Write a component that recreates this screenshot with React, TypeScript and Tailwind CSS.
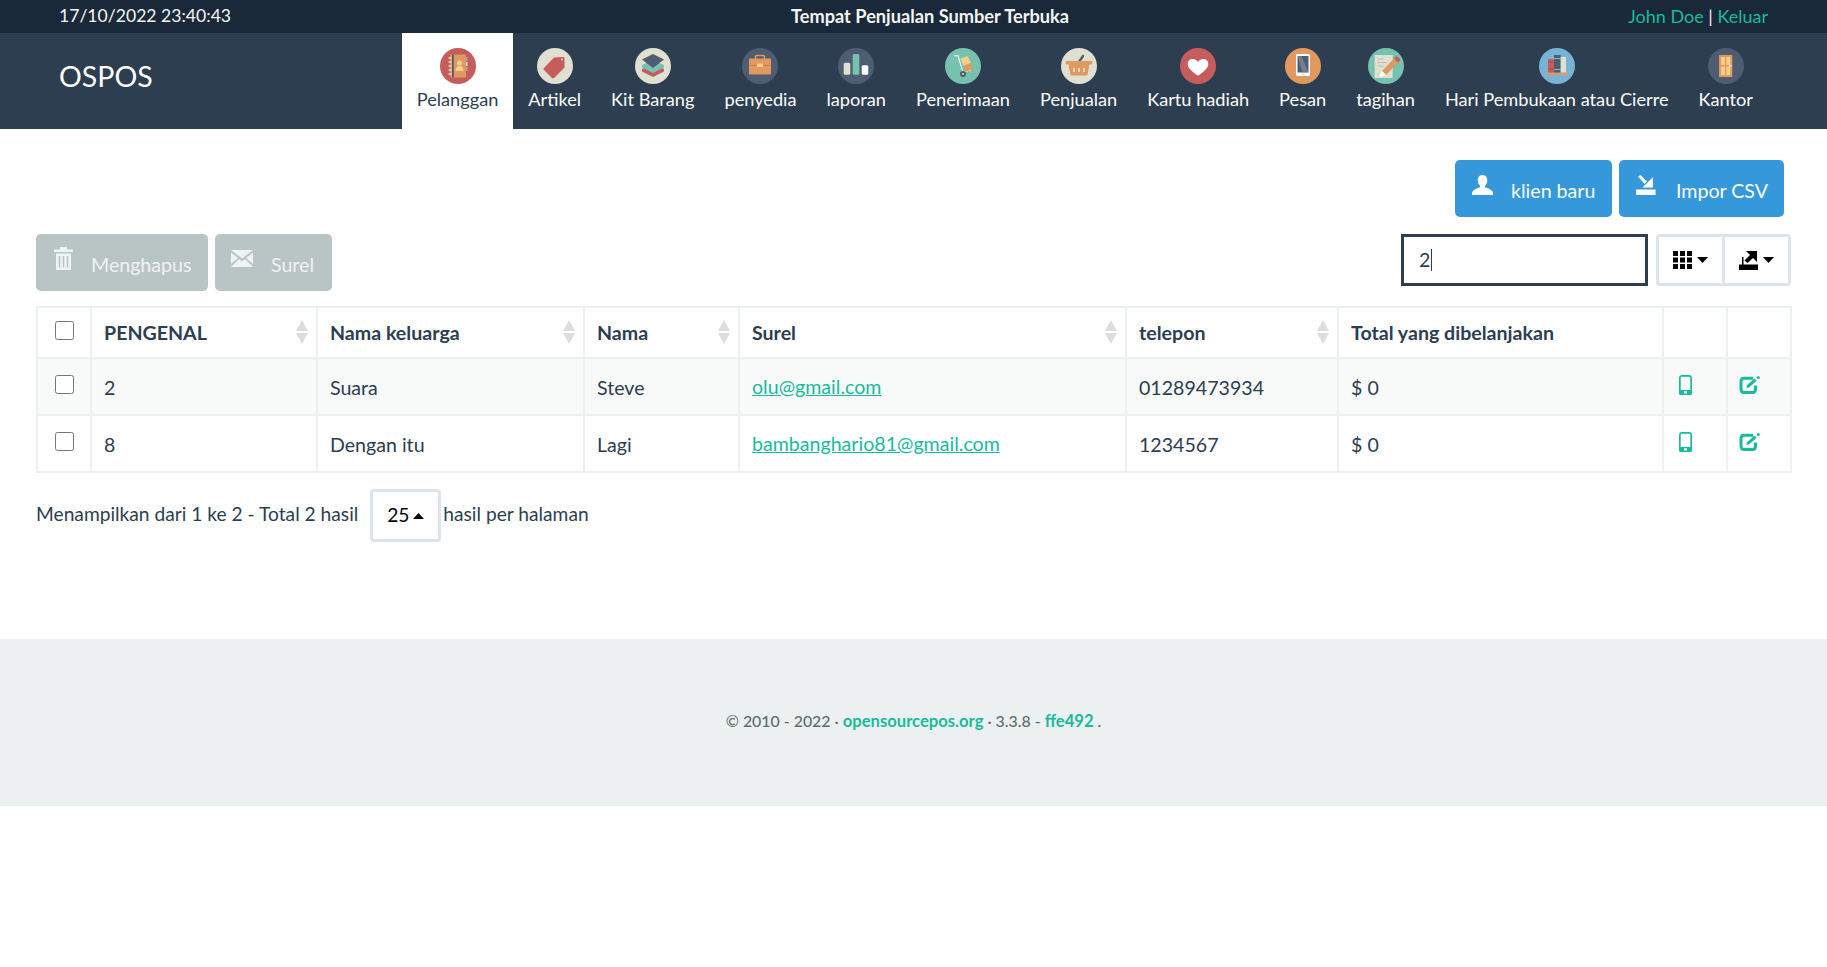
import React from "react";

const menu = [
  { label: "Pelanggan", icon: "contacts", active: true },
  { label: "Artikel", icon: "tag" },
  { label: "Kit Barang", icon: "layers" },
  { label: "penyedia", icon: "case" },
  { label: "laporan", icon: "bars" },
  { label: "Penerimaan", icon: "trolley" },
  { label: "Penjualan", icon: "basket" },
  { label: "Kartu hadiah", icon: "heart" },
  { label: "Pesan", icon: "phone" },
  { label: "tagihan", icon: "note" },
  { label: "Hari Pembukaan atau Cierre", icon: "books" },
  { label: "Kantor", icon: "door" },
];

const rows = [
  { id: "2", last: "Suara", first: "Steve", email: "olu@gmail.com", phone: "01289473934", total: "$ 0" },
  { id: "8", last: "Dengan itu", first: "Lagi", email: "bambanghario81@gmail.com", phone: "1234567", total: "$ 0" },
];

const RED = "#c75c5c";
const CREAM = "#e0e0d1";
const SLATE = "#4f5d73";
const GREEN = "#76c2af";
const ORANGE = "#e0995e";
const YELLOW = "#f5cf87";

function MenuIcon({ name }: { name: string }) {
  const bg: Record<string, string> = {
    contacts: RED, tag: CREAM, layers: CREAM, case: SLATE, bars: SLATE, trolley: GREEN,
    basket: CREAM, heart: RED, phone: ORANGE, note: GREEN, books: "#77b3d4", door: SLATE,
  };
  return (
    <svg width="36" height="36" viewBox="0 0 36 36">
      <circle cx="18" cy="18" r="18" fill={bg[name]} />
      {name === "contacts" && (
        <>
          <rect x="25.5" y="9" width="2" height="4" fill="#77b3d4" />
          <rect x="25.5" y="14" width="2" height="4" fill={CREAM} />
          <rect x="25.5" y="19" width="2" height="4" fill={GREEN} />
          <rect x="10" y="6.5" width="16" height="23" rx="1" fill={ORANGE} />
          <rect x="12" y="6.5" width="1.8" height="23" fill={SLATE} />
          <path d="M8.5 10h3M8.5 14h3M8.5 18h3M8.5 22h3M8.5 26h3" stroke={CREAM} strokeWidth="1.4" />
          <circle cx="19.5" cy="15" r="2.6" fill={YELLOW} />
          <path d="M15.5 23c0-3.500 1.500-5 4-5s4 1.500 4 5z" fill={YELLOW} />
        </>
      )}
      {name === "tag" && (
        <>
          <path d="M17 9.500 26 9c1 0 1.500.5 1.500 1.500V19.500L17 30c-.6.600-1.400.600-2 0L7 22c-.6-.6-.6-1.400 0-2z" fill={RED} />
          <circle cx="25" cy="11.500" r="1" fill={CREAM} />
        </>
      )}
      {name === "layers" && (
        <>
          <path d="M18 16 29 21v2.500L18 29 7 23.500V21z" fill={RED} />
          <path d="M18 12 29 17v2.500L18 25 7 19.500V17z" fill={GREEN} />
          <path d="M18 6 29 11.500 18 20 7 11.500z" fill={SLATE} />
        </>
      )}
      {name === "case" && (
        <>
          <rect x="13.500" y="7.500" width="9" height="5" rx="1.500" fill="none" stroke={ORANGE} strokeWidth="1.600" />
          <rect x="7" y="10.500" width="22" height="16" rx="1" fill={ORANGE} />
          <rect x="7" y="17" width="22" height="1" fill="#c9854f" />
          <rect x="15" y="15.500" width="6" height="3.500" rx=".5" fill={YELLOW} />
        </>
      )}
      {name === "bars" && (
        <>
          <rect x="5.700" y="14.700" width="6.600" height="12" rx="1.500" fill={CREAM} />
          <rect x="14.700" y="6" width="6.600" height="20.700" rx="1.500" fill={GREEN} />
          <rect x="23.700" y="17.300" width="6.600" height="9.400" rx="1.500" fill="#fff" />
        </>
      )}
      {name === "trolley" && (
        <>
          <path d="M9.300 7.700H13L18 24.300 26 22" fill="none" stroke="#fff" strokeWidth="1.100" />
          <path d="M15.500 10.500 22.500 8 26 15 18.500 18z" fill={YELLOW} />
          <path d="M18.500 18 26 15 28 21.500 20.500 24z" fill={ORANGE} />
          <circle cx="18" cy="26" r="3" fill={SLATE} />
          <circle cx="18" cy="26" r="1.100" fill={YELLOW} />
        </>
      )}
      {name === "basket" && (
        <>
          <path d="M15.500 17.500 22 8" stroke={SLATE} strokeWidth="2.400" strokeLinecap="round" />
          <path d="M7.500 16h21L26.500 27.500h-17z" fill={ORANGE} />
          <rect x="4.700" y="13" width="26.600" height="3.400" rx="1" fill={ORANGE} />
          <path d="M13 20v4M18 20v4M23 20v4" stroke={CREAM} strokeWidth="1.700" />
        </>
      )}
      {name === "heart" && (
        <path d="M18 27.700C12 23.500 7.700 20.200 7.700 16c0-3 2.300-5 5-5 2.300 0 4.200 1.200 5.300 3 1.100-1.800 3-3 5.300-3 2.700 0 5 2 5 5 0 4.200-4.300 7.500-10.300 11.700z" fill="#fff" />
      )}
      {name === "phone" && (
        <>
          <rect x="11" y="6" width="14" height="22" rx="1.500" fill="#fff" />
          <rect x="12.500" y="8" width="11" height="16.500" fill={SLATE} />
          <path d="M12.500 8h4l7 16.500h-6z" fill="#8a93a6" opacity=".6" />
          <circle cx="18" cy="26.200" r="1" fill={CREAM} />
        </>
      )}
      {name === "note" && (
        <>
          <rect x="6.700" y="7" width="18" height="23" fill={CREAM} />
          <path d="M9.500 11h6M9.500 14.500h9M9.500 18h6M9.500 26h6" stroke="#b9b9a8" strokeWidth=".9" />
          <path d="M14 23 26 10.500l4 4L18 27z" fill={ORANGE} />
          <path d="M26 10.500l1.800-1.800c.6-.6 1.400-.6 2 0l2 2c.6.6.6 1.400 0 2L30 14.500z" fill={RED} />
          <path d="M14 23l4 4-5.500 2z" fill="#fff" />
          <circle cx="13" cy="27" r="1.800" fill="#fff" />
        </>
      )}
      {name === "books" && (
        <>
          <rect x="9" y="11" width="6" height="13.700" rx="1" fill={RED} />
          <path d="M9 14h6M9 21h6" stroke="#a84a4a" strokeWidth="1" />
          <rect x="15" y="7" width="6.700" height="17.700" fill={SLATE} />
          <path d="M15 10.500h6.700M15 21.500h6.700" stroke={GREEN} strokeWidth="1" />
          <rect x="21.700" y="9" width="5.300" height="15.700" fill={CREAM} />
          <rect x="7" y="24.700" width="22" height="2.300" fill={ORANGE} />
        </>
      )}
      {name === "door" && (
        <>
          <rect x="11" y="7" width="13.300" height="22" rx=".5" fill={ORANGE} />
          <rect x="13" y="9" width="4" height="8" fill={YELLOW} />
          <rect x="18.300" y="9" width="4" height="8" fill={YELLOW} />
          <rect x="13" y="18.500" width="4" height="8.500" fill={YELLOW} />
          <rect x="18.300" y="18.500" width="4" height="8.500" fill={YELLOW} />
          <circle cx="22.500" cy="18" r="1.300" fill={CREAM} />
        </>
      )}
    </svg>
  );
}

function SortArrows() {
  return (
    <svg width="12" height="24" viewBox="0 0 12 24" className="shrink-0">
      <path d="M6 0 12 11H0z" fill="#dddddd" />
      <path d="M0 13h12L6 24z" fill="#dddddd" />
    </svg>
  );
}

function PhoneGlyph() {
  return (
    <svg width="13" height="20" viewBox="0 0 13 20">
      <path fillRule="evenodd" d="M3 0h7c1.700 0 3 1.300 3 3v15.500c0 .8-.7 1.500-1.500 1.500h-10C.7 20 0 19.300 0 18.500V3C0 1.300 1.300 0 3 0zM1.700 3v12h9.600V3c0-.8-.6-1.300-1.300-1.300H3C2.300 1.700 1.700 2.200 1.700 3zM5 16.300V18.500h3v-2.200z" fill="#18bc9c" />
    </svg>
  );
}

function EditGlyph() {
  return (
    <svg width="21" height="19" viewBox="0 0 21 19">
      <path d="M14 2.200H5C3 2.200 2 3.500 2 5.500v7.500c0 2.200 1 3.500 3 3.500h8.500c2 0 3-1.300 3-3.500V9.500" fill="none" stroke="#18bc9c" strokeWidth="3" />
      <path d="M7.500 12 8 9.300 15.500 2.500 17.700 4.700 10 11.500z" fill="#18bc9c" />
      <circle cx="19.300" cy="1.600" r="1.500" fill="#18bc9c" />
    </svg>
  );
}

function Caret() {
  return (
    <svg width="11" height="6" viewBox="0 0 11 6">
      <path d="M0 0h11L5.500 6z" fill="#000" />
    </svg>
  );
}

export default function App() {
  return (
    <div className="min-h-[967px] bg-white font-['Lato','Noto_Sans',sans-serif] text-[19.6px] text-[#2c3e50]">
      <div className="flex h-[33px] items-center justify-between bg-[#1a2939] px-[59px] text-[#f4f6f6]">
        <div className="w-[333px] text-[17.6px]">17/10/2022 23:40:43</div>
        <div className="text-[18.2px] font-bold">Tempat Penjualan Sumber Terbuka</div>
        <div className="w-[300px] text-right text-[18px] text-[#ecf0f1]">
          <a className="text-[#18bc9c]">John Doe</a> | <a className="text-[#18bc9c]">Keluar</a>
        </div>
      </div>

      <nav className="flex h-[96px] items-stretch justify-between bg-[#2c3e50] pl-[59px] pr-[59px]">
        <div className="pt-[23px] text-[28.5px] leading-[40px] text-white">OSPOS</div>
        <ul className="flex">
          {menu.map((item) => (
            <li
              key={item.label}
              className={
                item.active
                  ? "flex flex-col items-center bg-white px-[15px] pt-[15px] text-[#2c3e50]"
                  : "flex flex-col items-center px-[15px] pt-[15px] text-white"
              }
            >
              <MenuIcon name={item.icon} />
              <span className="mt-[3px] whitespace-nowrap text-[18.2px] leading-[24px]">{item.label}</span>
            </li>
          ))}
        </ul>
      </nav>

      <main className="px-[36px]">
        <div className="flex justify-end gap-[7px] pr-[7px] pt-[31px]">
          <button className="flex h-[57px] w-[157px] items-center rounded-[5px] bg-[#3498db] pl-[17px] text-white">
            <svg width="21" height="20" viewBox="0 0 21 20" className="mb-[7px]">
              <path d="M10.500 0c3 0 4.800 2.200 4.800 5.300 0 2.300-1 4.300-2.300 5.500v1.400c3 1 6.500 2.500 7.500 4.300.4.800.5 2.100.5 3.500H0c0-1.400.1-2.700.5-3.500 1-1.800 4.500-3.300 7.500-4.300v-1.400C6.700 9.600 5.700 7.600 5.700 5.300 5.700 2.200 7.500 0 10.500 0z" fill="#fff" />
            </svg>
            <span className="ml-[18px] whitespace-nowrap pt-[5px]">klien baru</span>
          </button>
          <button className="flex h-[57px] w-[165px] items-center rounded-[5px] bg-[#3498db] pl-[17px] text-white">
            <svg width="20" height="20" viewBox="0 0 20 20" className="mb-[7px]">
              <path d="M2 1.500 4.500 0 11 6.500 8.500 9zM17 2v10.500H6.500zM0 14.500h19.500V20H0z" fill="#fff" />
            </svg>
            <span className="ml-[20px] whitespace-nowrap pt-[5px]">Impor CSV</span>
          </button>
        </div>

        <div className="mt-[17px] flex items-start justify-between">
          <div className="flex gap-[7px]">
            <button className="flex h-[57px] w-[172px] items-center rounded-[5px] bg-[#b9c5c4] pl-[18px] text-[#f0f3f3]">
              <svg width="19" height="23" viewBox="0 0 19 23" className="mb-[9px]">
                <path fillRule="evenodd" d="M6 0h7v2.500h6V5H0V2.500h6zM2 6.500h15V23H2zM4.800 9v11.500H6.300V9zM8.800 9v11.500h1.500V9zM12.800 9v11.500h1.500V9z" fill="#f0f3f3" />
              </svg>
              <span className="ml-[18px] whitespace-nowrap pt-[4px]">Menghapus</span>
            </button>
            <button className="flex h-[57px] w-[117px] items-center rounded-[5px] bg-[#b9c5c4] pl-[16px] text-[#f0f3f3]">
              <svg width="22" height="17" viewBox="0 0 22 17" className="mb-[9px]">
                <path d="M0 0h22L11 8.500zM0 2.500 7 8 0 14zM22 2.500V14L15 8zM8 9l3 2.300L14 9l8 8H0z" fill="#f0f3f3" />
              </svg>
              <span className="ml-[18px] whitespace-nowrap pt-[4px]">Surel</span>
            </button>
          </div>
          <div className="flex gap-[8px]">
            <div className="flex h-[52px] w-[247px] items-center border-[3px] border-[#2c3e50] pl-[15px] text-[#2c3e50]">
              2<span className="ml-[1px] inline-block h-[22px] w-px bg-[#2c3e50]" />
            </div>
            <div className="flex h-[52px] rounded-[4px] border-[3px] border-[#dce4ec]">
              <div className="flex w-[66px] items-center justify-center gap-[5px] border-r-[3px] border-[#dce4ec]">
                <svg width="19" height="18" viewBox="0 0 19 18">
                  <path d="M0 0h5v5H0zM7 0h5v5H7zM14 0h5v5h-5zM0 6.500h5v5H0zM7 6.500h5v5H7zM14 6.500h5v5h-5zM0 13h5v5H0zM7 13h5v5H7zM14 13h5v5h-5z" fill="#000" />
                </svg>
                <Caret />
              </div>
              <div className="flex w-[63px] items-center justify-center gap-[5px]">
                <svg width="19" height="20" viewBox="0 0 19 20">
                  <path d="M5.500 10.500 11 5 7 1h11v11l-4-4-5.500 5zM3 7h1.500v7.500H3zM0 14.500h19V20H0z" fill="#000" />
                </svg>
                <Caret />
              </div>
            </div>
          </div>
        </div>

        <table className="mt-[15px] w-[1754px] table-fixed border-collapse">
          <colgroup>
            <col className="w-[54px]" />
            <col className="w-[226px]" />
            <col className="w-[267px]" />
            <col className="w-[155px]" />
            <col className="w-[387px]" />
            <col className="w-[212px]" />
            <col className="w-[325px]" />
            <col className="w-[64px]" />
            <col className="w-[64px]" />
          </colgroup>
          <thead>
            <tr className="h-[51px]">
              <th className="border-2 border-[#ecf0f1] text-center">
                <input type="checkbox" className="mb-[8px] h-[19px] w-[19px] align-middle" />
              </th>
              {["PENGENAL", "Nama keluarga", "Nama", "Surel", "telepon"].map((label) => (
                <th key={label} className="border-2 border-[#ecf0f1] pl-[12px] pr-[8px] text-left font-bold">
                  <div className="flex items-center justify-between">
                    <span>{label}</span>
                    <SortArrows />
                  </div>
                </th>
              ))}
              <th className="border-2 border-[#ecf0f1] pl-[12px] text-left font-bold">Total yang dibelanjakan</th>
              <th className="border-2 border-[#ecf0f1]" />
              <th className="border-2 border-[#ecf0f1]" />
            </tr>
          </thead>
          <tbody>
            {rows.map((row, i) => (
              <tr key={row.id} className={i === 0 ? "h-[57px] bg-[#f8f9f9]" : "h-[57px]"}>
                <td className="border-2 border-[#ecf0f1] text-center">
                  <input type="checkbox" className="mb-[8px] h-[19px] w-[19px] align-middle" />
                </td>
                <td className="border-2 border-[#ecf0f1] pl-[12px] pt-[2px]">{row.id}</td>
                <td className="border-2 border-[#ecf0f1] pl-[12px] pt-[2px]">{row.last}</td>
                <td className="border-2 border-[#ecf0f1] pl-[12px] pt-[2px]">{row.first}</td>
                <td className="border-2 border-[#ecf0f1] pl-[12px]">
                  <a className="text-[#18bc9c] underline">{row.email}</a>
                </td>
                <td className="border-2 border-[#ecf0f1] pl-[12px] pt-[2px]">{row.phone}</td>
                <td className="border-2 border-[#ecf0f1] pl-[12px] pt-[2px]">{row.total}</td>
                <td className="border-2 border-[#ecf0f1] pl-[15px]">
                  <div className="mb-[3px] flex">
                    <PhoneGlyph />
                  </div>
                </td>
                <td className="border-2 border-[#ecf0f1] pl-[11px]">
                  <div className="mb-[3px] flex">
                    <EditGlyph />
                  </div>
                </td>
              </tr>
            ))}
          </tbody>
        </table>

        <div className="mb-[97px] mt-[16px] flex items-center text-[19.2px]">
          <span className="mb-[3px]">Menampilkan dari 1 ke 2 - Total 2 hasil</span>
          <div className="ml-[12px] flex h-[53px] w-[71px] items-center justify-center gap-[4px] rounded-[4px] border-[3px] border-[#dce4ec] text-black">
            <span>25</span>
            <svg width="11" height="6" viewBox="0 0 11 6">
              <path d="M0 6h11L5.500 0z" fill="#000" />
            </svg>
          </div>
          <span className="mb-[3px] ml-[2px]">hasil per halaman</span>
        </div>
      </main>

      <footer className="flex h-[167px] items-center justify-center bg-[#ecf0f1] pb-[2px] text-[15.9px] font-medium text-[#5d6d6e]">
        <span>
          © 2010 - 2022 · <a className="text-[16.6px] font-bold text-[#18bc9c]">opensourcepos.org</a> · 3.3.8 -{" "}
          <a className="text-[16.6px] font-bold text-[#18bc9c]">ffe492</a> .
        </span>
      </footer>
    </div>
  );
}
